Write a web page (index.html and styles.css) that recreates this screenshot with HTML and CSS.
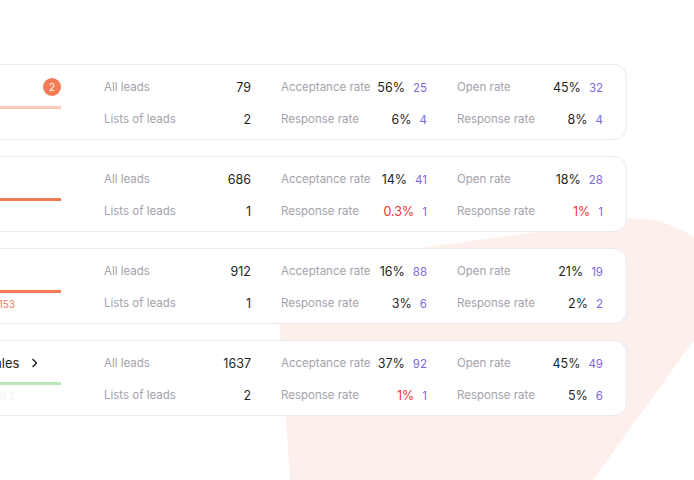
FILE: index.html
```html
<!DOCTYPE html>
<html lang="en">

<head>
    <meta charset="UTF-8">
    <meta name="viewport" content="width=device-width, initial-scale=1.0">
    <title>Campaigns</title>
    <link rel="stylesheet" href="styles.css">
</head>

<body>
    <svg class="blob" width="694" height="480" viewBox="0 0 694 480" aria-hidden="true">
        <path d="M276 268 L630 219 C670 214 735 250 723 300 L593 480 L290 480 Z" fill="#fdf0ec" />
    </svg>

    <div class="list">
        <div class="card">
            <div class="campaign">
                <div class="campaign-head">
                    <span class="campaign-name">Cold</span>
                    <span class="badge">2</span>
                </div>
                <div class="bar bar-light"></div>
            </div>
            <div class="stats">
                <div class="stat">
                    <div class="stat-row"><span class="label">All leads</span><span class="value">79</span></div>
                    <div class="stat-row"><span class="label">Lists of leads</span><span class="value">2</span></div>
                </div>
                <div class="stat">
                    <div class="stat-row"><span class="label">Acceptance rate</span><span class="value">56%<b class="count">25</b></span></div>
                    <div class="stat-row"><span class="label">Response rate</span><span class="value">6%<b class="count">4</b></span></div>
                </div>
                <div class="stat">
                    <div class="stat-row"><span class="label">Open rate</span><span class="value">45%<b class="count">32</b></span></div>
                    <div class="stat-row"><span class="label">Response rate</span><span class="value">8%<b class="count">4</b></span></div>
                </div>
            </div>
        </div>

        <div class="card">
            <div class="campaign">
                <div class="campaign-head">
                    <span class="campaign-name">Warm</span>
                </div>
                <div class="bar bar-orange"></div>
            </div>
            <div class="stats">
                <div class="stat">
                    <div class="stat-row"><span class="label">All leads</span><span class="value">686</span></div>
                    <div class="stat-row"><span class="label">Lists of leads</span><span class="value">1</span></div>
                </div>
                <div class="stat">
                    <div class="stat-row"><span class="label">Acceptance rate</span><span class="value">14%<b class="count">41</b></span></div>
                    <div class="stat-row"><span class="label">Response rate</span><span class="value low">0.3%<b class="count">1</b></span></div>
                </div>
                <div class="stat">
                    <div class="stat-row"><span class="label">Open rate</span><span class="value">18%<b class="count">28</b></span></div>
                    <div class="stat-row"><span class="label">Response rate</span><span class="value low">1%<b class="count">1</b></span></div>
                </div>
            </div>
        </div>

        <div class="card">
            <div class="campaign">
                <div class="campaign-head">
                    <span class="campaign-name">Hot</span>
                </div>
                <div class="bar bar-orange"></div>
                <div class="campaign-note">Left 1153</div>
            </div>
            <div class="stats">
                <div class="stat">
                    <div class="stat-row"><span class="label">All leads</span><span class="value">912</span></div>
                    <div class="stat-row"><span class="label">Lists of leads</span><span class="value">1</span></div>
                </div>
                <div class="stat">
                    <div class="stat-row"><span class="label">Acceptance rate</span><span class="value">16%<b class="count">88</b></span></div>
                    <div class="stat-row"><span class="label">Response rate</span><span class="value">3%<b class="count">6</b></span></div>
                </div>
                <div class="stat">
                    <div class="stat-row"><span class="label">Open rate</span><span class="value">21%<b class="count">19</b></span></div>
                    <div class="stat-row"><span class="label">Response rate</span><span class="value">2%<b class="count">2</b></span></div>
                </div>
            </div>
        </div>

        <div class="card">
            <div class="campaign">
                <div class="campaign-head">
                    <span class="campaign-name">Enterprise IT Sales
                        <svg class="chevron" width="8" height="10" viewBox="0 0 8 10"><path d="M2 1.5 L5.5 5 L2 8.5" fill="none" stroke="#222" stroke-width="1.5" stroke-linecap="round" stroke-linejoin="round" /></svg>
                    </span>
                </div>
                <div class="bar bar-green"></div>
                <div class="campaign-note faint">Completed 2</div>
            </div>
            <div class="stats">
                <div class="stat">
                    <div class="stat-row"><span class="label">All leads</span><span class="value">1637</span></div>
                    <div class="stat-row"><span class="label">Lists of leads</span><span class="value">2</span></div>
                </div>
                <div class="stat">
                    <div class="stat-row"><span class="label">Acceptance rate</span><span class="value">37%<b class="count">92</b></span></div>
                    <div class="stat-row"><span class="label">Response rate</span><span class="value low">1%<b class="count">1</b></span></div>
                </div>
                <div class="stat">
                    <div class="stat-row"><span class="label">Open rate</span><span class="value">45%<b class="count">49</b></span></div>
                    <div class="stat-row"><span class="label">Response rate</span><span class="value">5%<b class="count">6</b></span></div>
                </div>
            </div>
        </div>
    </div>
</body>

</html>
```

FILE: styles.css
```css
body {
    font-family: Inter, "Noto Sans", sans-serif;
    background-color: #fff;
    margin: 0;
    padding: 64px 0 0;
    overflow: hidden;
    position: relative;
    height: 416px;
}

.blob {
    position: absolute;
    left: 0;
    top: 0;
    z-index: 0;
}

.list {
    position: relative;
    z-index: 1;
    display: flex;
    flex-direction: column;
    gap: 16px;
    margin-left: -121px;
    width: 748px;
}

.card {
    display: flex;
    gap: 43px;
    background-color: #fff;
    border: 1px solid #e9e9ee;
    border-radius: 13px;
    padding: 12px 23px 10px 24px;
}

.campaign {
    width: 157px;
    flex-shrink: 0;
}

.campaign-head {
    display: flex;
    align-items: center;
    justify-content: space-between;
    height: 20px;
}

.campaign-name {
    font-size: 13px;
    color: #222228;
    display: flex;
    align-items: center;
    gap: 12px;
    white-space: nowrap;
}

.badge {
    width: 18px;
    height: 18px;
    border-radius: 50%;
    background-color: #f47c55;
    color: #fff;
    font-size: 10px;
    display: flex;
    align-items: center;
    justify-content: center;
}

.bar {
    height: 3px;
    margin-top: 9px;
}

.bar-light {
    background-color: #fcc9b6;
}

.bar-orange {
    background-color: #f07a55;
}

.bar-green {
    background-color: #b6e6ba;
}

.campaign-note {
    font-size: 10px;
    line-height: 14px;
    margin-top: 4px;
    color: #f07a55;
    text-align: right;
    padding-right: 46px;
}

.campaign-note.faint {
    color: #f4f4f6;
}

.stats {
    display: grid;
    grid-template-columns: 147px 146px 146px;
    column-gap: 30px;
}

.stat {
    display: flex;
    flex-direction: column;
    gap: 12px;
}

.stat-row {
    display: flex;
    justify-content: space-between;
    align-items: center;
    height: 20px;
}

.label {
    font-size: 11.5px;
    color: #a3a3ac;
}

.value {
    font-size: 12.5px;
    color: #1f1f25;
    white-space: nowrap;
}

.value.low {
    color: #ee3636;
}

.count {
    font-weight: 400;
    font-size: 11.5px;
    color: #7a6ae0;
    margin-left: 8px;
}
```
